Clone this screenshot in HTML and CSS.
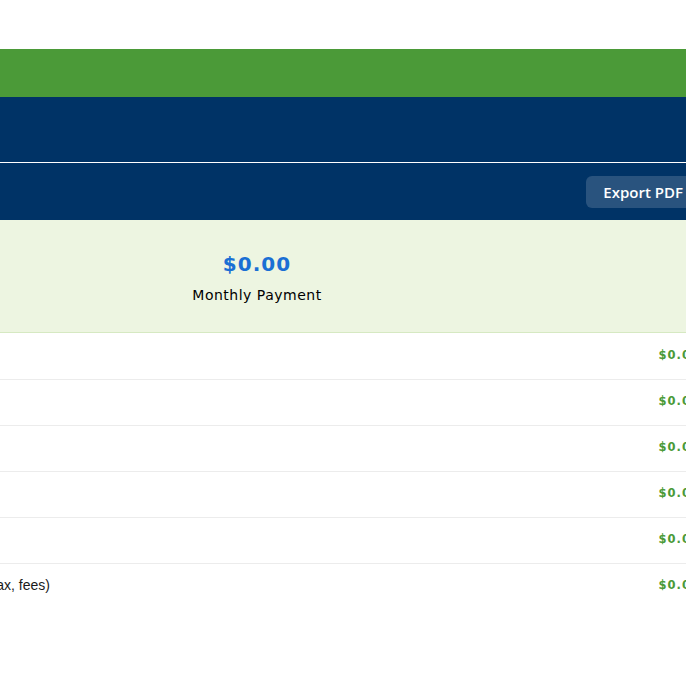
FILE: index.html
```html
<!DOCTYPE html>
<html lang="en">
<head>
  <meta charset="UTF-8">
  <title>Mortgage Calculator - Payment Breakdown</title>
  <link rel="stylesheet" href="styles.css">
</head>
<body>

  <div class="page">
    <div class="top-bar"></div>

    <div class="hero">
      <div class="hero-title"></div>
      <div class="toolbar">
        <button class="btn-export" type="button">Export PDF</button>
      </div>
    </div>

    <div class="summary">
      <div class="summary-item">
        <div class="summary-value">$0.00</div>
        <div class="summary-label">Monthly Payment</div>
      </div>
    </div>

    <div class="breakdown">
      <div class="row"><span class="label">Principal &amp; Interest</span><span class="value">$0.00</span></div>
      <div class="row"><span class="label">Property Tax</span><span class="value">$0.00</span></div>
      <div class="row"><span class="label">Home Insurance</span><span class="value">$0.00</span></div>
      <div class="row"><span class="label">HOA Dues</span><span class="value">$0.00</span></div>
      <div class="row"><span class="label">Mortgage Insurance</span><span class="value">$0.00</span></div>
      <div class="row"><span class="label">Other One-Time Costs (title, tax, fees)</span><span class="value">$0.00</span></div>
    </div>
  </div>

</body>
</html>
```

FILE: styles.css
```css
:root {
  --green: #4b9a38;
  --navy: #003366;
  --blue: #1a6fd4;
  --soft: #edf5e1;
  --line: #ececec;
  --text: #1a1a1a;
}

html, body {
  overflow: hidden;
}

body {
  margin: 0;
  padding-top: 49px;
  background: #fff;
  color: var(--text);
  font-family: 'DejaVu Sans', sans-serif;
}

.page {
  width: 926px;
  margin-left: -206px;
}

.top-bar {
  height: 48px;
  background: var(--green);
}

.hero {
  background: var(--navy);
}

.hero-title {
  height: 65px;
  border-bottom: 1px solid #fff;
}

.toolbar {
  height: 57px;
  display: flex;
  align-items: center;
  justify-content: flex-end;
  padding: 0 20px;
}

.btn-export {
  height: 32px;
  padding: 0 17px;
  border: 0;
  border-radius: 6px;
  background: rgba(255, 255, 255, 0.16);
  color: #fff;
  font-family: 'Open Sans', sans-serif;
  font-size: 15px;
  font-weight: 600;
  cursor: pointer;
}

.summary {
  height: 112px;
  background: var(--soft);
  border-bottom: 1px solid #d6e9c2;
  display: flex;
  align-items: center;
  justify-content: center;
}

.summary-item {
  text-align: center;
  padding-top: 2px;
}

.summary-value {
  color: var(--blue);
  font-size: 20px;
  font-weight: bold;
  letter-spacing: 1px;
}

.summary-label {
  margin-top: 11px;
  font-size: 14px;
  letter-spacing: 0.5px;
  color: #000;
}

.breakdown {
  margin-top: 1px;
}

.row {
  height: 46px;
  box-sizing: border-box;
  display: flex;
  align-items: center;
  justify-content: space-between;
  padding: 0 20px 4px;
  border-bottom: 1px solid var(--line);
}

.row:last-child {
  border-bottom: 0;
}

.label {
  font-family: 'Liberation Sans', Arial, sans-serif;
  font-size: 14px;
  color: var(--text);
}

.value {
  color: var(--green);
  font-size: 11.5px;
  font-weight: bold;
  letter-spacing: 1px;
}
```
